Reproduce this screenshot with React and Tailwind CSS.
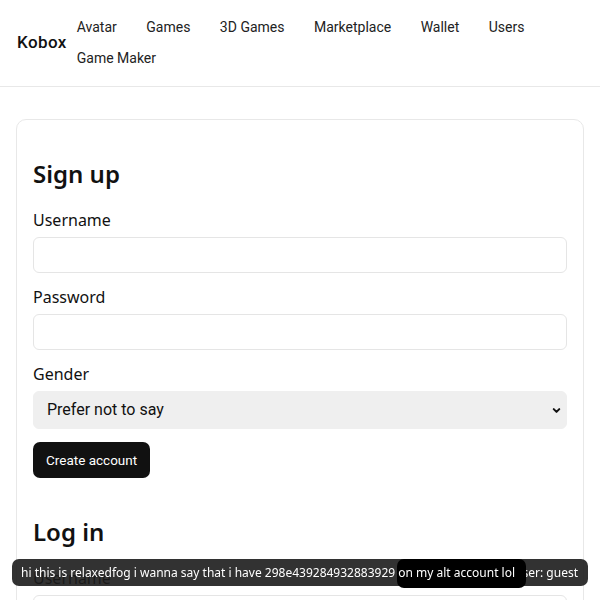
import React from 'react';
import { ChevronDown } from 'lucide-react';

const navLinks = ['Avatar', 'Games', '3D Games', 'Marketplace', 'Wallet', 'Users', 'Game Maker'];

const Field = ({ label, type = 'text', first = false }) => (
  <div className={first ? 'mt-[18px]' : 'mt-[12px]'}>
    <label className="block text-[16px] leading-[24px] text-[#111]">{label}</label>
    <input
      type={type}
      className="mt-[5px] block w-full h-[36px] rounded-md border border-[#e5e5e5] bg-white px-3 outline-none"
    />
  </div>
);

export default function App() {
  return (
    <div className="min-h-screen bg-white font-['Noto_Sans',sans-serif] text-[#111]">
      {/* Header */}
      <header className="flex items-center border-b border-[#e8e8e8] px-[17px] pt-[17px] pb-[18px]">
        <div className="mr-[10px] font-['Roboto',sans-serif] text-[17px] font-medium tracking-[0.4px] text-[#111]">Kobox</div>
        <nav className="flex flex-1 flex-wrap gap-x-[29.5px] gap-y-[11px] font-['Roboto',sans-serif] text-[14px] leading-[20px] text-[#222]">
          {navLinks.map((l) => (
            <a key={l} className="cursor-pointer">{l}</a>
          ))}
        </nav>
      </header>

      {/* Main */}
      <main className="px-4 pt-8">
        <div className="rounded-[10px] border border-[#e8e8e8] px-4 pt-[38px] pb-10">
          <h2 className="text-[24px] font-semibold leading-[32px]">Sign up</h2>
          <Field label="Username" first />
          <Field label="Password" type="password" />
          <div className="mt-[12px]">
            <label className="block text-[16px] leading-[24px]">Gender</label>
            <div className="relative mt-[5px]">
              <select className="block h-[38px] w-full appearance-none rounded-md border border-[#efefef] bg-[#efefef] pl-[13px] font-['Roboto',sans-serif] text-[16px] text-[#111] outline-none">
                <option>Prefer not to say</option>
                <option>Male</option>
                <option>Female</option>
              </select>
              <ChevronDown className="pointer-events-none absolute right-[5px] top-[14px] h-[11px] w-[11px]" strokeWidth={4.5} />
            </div>
          </div>
          <button className="mt-[13px] h-[36px] rounded-[7px] bg-[#111] px-[13px] font-['Roboto',sans-serif] text-[13.5px] text-white">
            Create account
          </button>

          <h2 className="mt-[38px] text-[24px] font-semibold leading-[32px]">Log in</h2>
          <Field label="Username" first />
          <Field label="Password" type="password" />
        </div>
      </main>

      {/* Chat toast */}
      <div className="fixed bottom-[14px] left-[12px] right-[12px] h-[27px] rounded-[7px] bg-[#1c1c1c]/90 text-[12px] text-white">
        <span className="absolute right-[10px] top-0 leading-[27px]">User: guest</span>
        <div className="absolute left-[385px] top-0 h-[29px] w-[129px] rounded-[7px] bg-black" />
        <span className="absolute left-[9px] top-0 whitespace-nowrap leading-[27px]">
          hi this is relaxedfog i wanna say that i have 298e439284932883929 on my alt account lol
        </span>
      </div>
    </div>
  );
}
